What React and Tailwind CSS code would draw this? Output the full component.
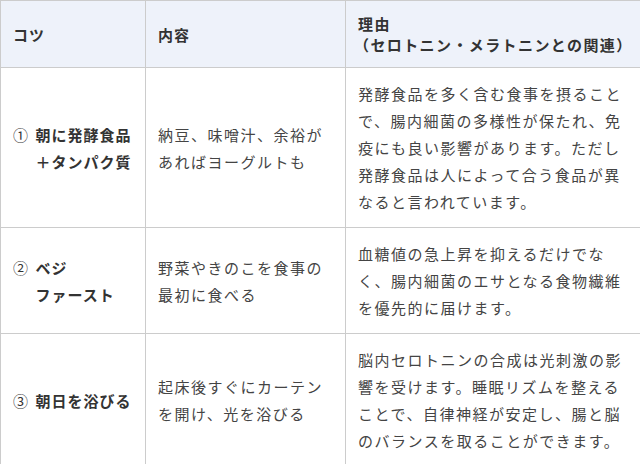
export default function App() {
  const font = { fontFamily: '"Noto Sans CJK JP", "Noto Sans", sans-serif' };
  const rows = [
    {
      num: "①",
      title: ["朝に発酵食品", "＋タンパク質"],
      content: "納豆、味噌汁、余裕があればヨーグルトも",
      reason:
        "発酵食品を多く含む食事を摂ることで、腸内細菌の多様性が保たれ、免疫にも良い影響があります。ただし発酵食品は人によって合う食品が異なると言われています。",
    },
    {
      num: "②",
      title: ["ベジ", "ファースト"],
      content: "野菜やきのこを食事の最初に食べる",
      reason:
        "血糖値の急上昇を抑えるだけでなく、腸内細菌のエサとなる食物繊維を優先的に届けます。",
    },
    {
      num: "③",
      title: ["朝日を浴びる"],
      content: "起床後すぐにカーテンを開け、光を浴びる",
      reason:
        "脳内セロトニンの合成は光刺激の影響を受けます。睡眠リズムを整えることで、自律神経が安定し、腸と脳のバランスを取ることができます。",
    },
  ];
  return (
    <div className="w-[640px] h-[464px] bg-white" style={font}>
      <table className="w-[640px] table-fixed border-collapse text-[15px] tracking-[1.5px]">
        <colgroup>
          <col className="w-[145px]" />
          <col className="w-[200px]" />
          <col className="w-[295px]" />
        </colgroup>
        <thead>
          <tr className="bg-[#eef2fa] h-[67px]">
            <th className="border border-[#cccccc] px-[12px] py-[12px] text-left align-middle font-bold text-[#333] leading-[21px] tracking-[1px]">
              コツ
            </th>
            <th className="border border-[#cccccc] px-[12px] py-[12px] text-left align-middle font-bold text-[#333] leading-[21px] tracking-[1px]">
              内容
            </th>
            <th className="border border-[#cccccc] pl-[12px] pr-[2px] py-[12px] text-left align-middle font-bold text-[#333] leading-[21px] tracking-[1.4px] whitespace-nowrap">
              理由
              <br />
              <span className="-ml-[4px]">（セロトニン・メラトニンとの関連）</span>
            </th>
          </tr>
        </thead>
        <tbody>
          {rows.map((r, i) => (
            <tr key={i}>
              <td className="border border-[#cccccc] pl-[12px] pr-[8px] py-[12px] align-middle font-bold text-[#333] leading-[27px]">
                <div className="flex gap-[6px]">
                  <span className="font-normal shrink-0">{r.num}</span>
                  <div className="whitespace-nowrap tracking-[1px]">
                    {r.title.map((t, j) => (
                      <div key={j}>{t}</div>
                    ))}
                  </div>
                </div>
              </td>
              <td className="border border-[#cccccc] px-[12px] py-[12px] align-middle text-[#444] leading-[27px]">
                {r.content}
              </td>
              <td className="border border-[#cccccc] px-[12px] py-[12px] align-middle text-[#444] leading-[27px]">
                {r.reason}
              </td>
            </tr>
          ))}
        </tbody>
      </table>
    </div>
  );
}
